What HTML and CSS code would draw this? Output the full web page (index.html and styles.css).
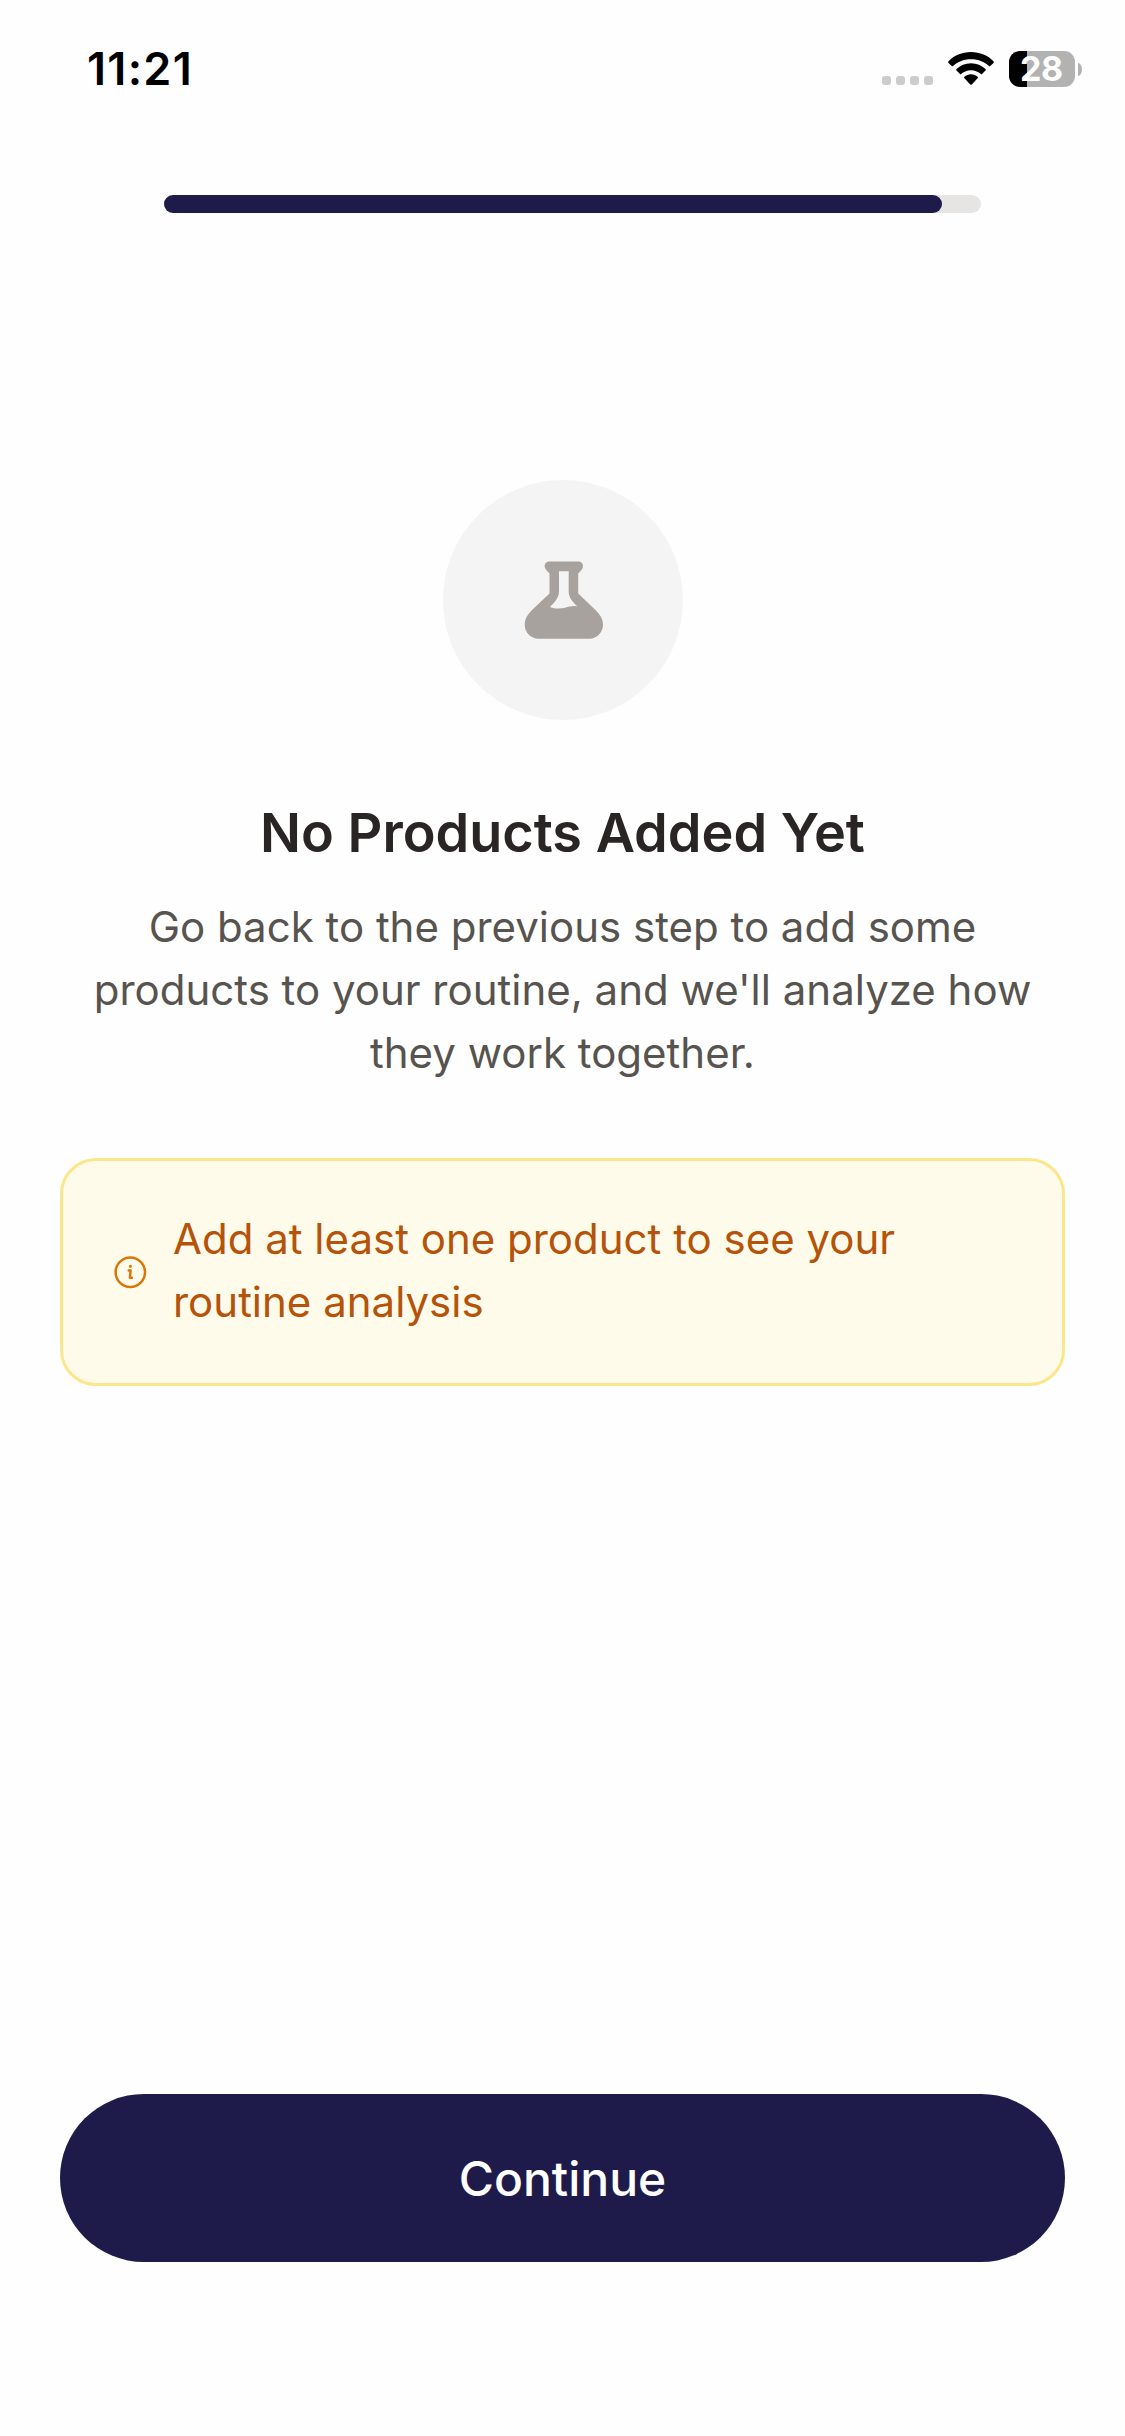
FILE: index.html
```html
<!DOCTYPE html>
<html lang="en">
<head>
<meta charset="utf-8">
<title>Routine analysis</title>
<link rel="stylesheet" href="styles.css">
</head>
<body>
<div class="screen">
  <header class="status-bar">
    <span class="time">11:21</span>
    <div class="status-icons">
      <div class="signal"><i></i><i></i><i></i><i></i></div>
      <svg class="wifi" viewBox="0 0 46 34" aria-hidden="true">
        <path d="M23 0C14 0 6 3.5 0.5 9.2C0 9.8 0 10.4 0.5 10.9L4.3 14.6C9 9.8 15.600 7.200 23 7.200S37 9.800 41.700 14.600L45.500 10.900C46 10.400 46 9.800 45.500 9.200C40 3.500 32 0 23 0Z"/>
        <path d="M23 11.200C17.300 11.200 12.200 13.400 8.500 17C8 17.500 8 18.100 8.500 18.600L12.500 22.600C15.300 19.900 18.900 18.300 23 18.300S30.700 19.900 33.500 22.600L37.500 18.600C38 18.100 38 17.500 37.500 17C33.800 13.400 28.700 11.200 23 11.200Z"/>
        <path d="M23 22.300C20.500 22.300 18.200 23.200 16.400 24.800C15.900 25.300 15.900 25.800 16.400 26.300L22.200 32.400C22.700 32.900 23.300 32.900 23.800 32.400L29.600 26.300C30.100 25.800 30.100 25.300 29.600 24.800C27.800 23.200 25.500 22.300 23 22.300Z"/>
      </svg>
      <div class="battery">
        <div class="battery-body">28</div>
        <div class="battery-cap"></div>
      </div>
    </div>
  </header>

  <div class="progress"><div class="progress-fill" style="width: 95.23%"></div></div>

  <main class="content">
    <div class="flask-badge">
      <svg class="flask" viewBox="0 0 78 78" aria-hidden="true">
        <path fill-rule="evenodd" d="M25.800 0.500H54C57 0.500 59 2.500 59 5.300C59 8 57 9.500 54.200 12.500V32.500L72 49.500C76.500 54 79 58.500 79 63.500C79 71.500 73 77.700 65.500 77.700H14.500C6.700 77.700 0.700 71.500 0.700 63.500C0.700 58.500 3 54 7.500 49.500L25.500 32.500V12.500C23 9.500 20.600 8 20.600 5.300C20.600 2.500 22.800 0.500 25.800 0.500ZM35 10.200V30.500C35 36.500 30.500 41.500 26 46C30.500 48 36.500 48 41 46.800C45.500 45.500 49.500 44.500 53.500 45.500C48.500 41 44.700 36.500 44.700 30.500V10.200Z"/>
      </svg>
    </div>
    <h1 class="title">No Products Added Yet</h1>
    <p class="description">Go back to the previous step to add some products to your routine, and we'll analyze how they work together.</p>
    <div class="notice">
      <svg class="info" viewBox="0 0 42 42" aria-hidden="true">
        <circle cx="21.300" cy="21.200" r="14.700"/>
        <path class="info-stem" d="M19.700 19.500H21.600L20.900 26.700H22.900"/>
        <circle class="info-dot" cx="21.400" cy="15.200" r="1.500"/>
      </svg>
      <p class="notice-text">Add at least one product to see your routine analysis</p>
    </div>
  </main>

  <footer class="footer"><button class="continue" type="button">Continue</button></footer>
</div>
</body>
</html>
```
FILE: styles.css
```css
* {
  box-sizing: border-box;
  margin: 0;
  padding: 0;
}

body {
  background: #fefefe;
  font-family: Inter, "Liberation Sans", sans-serif;
}

.screen {
  display: flex;
  flex-direction: column;
  width: 1125px;
  height: 2436px;
}

.status-bar {
  display: flex;
  justify-content: space-between;
  height: 195px;
  padding: 51px 43px 0 87px;
}

.time {
  height: 36px;
  font-size: 45px;
  font-weight: 600;
  line-height: 36px;
  letter-spacing: 1.3px;
  color: #000;
}

.status-icons {
  display: flex;
  height: 36px;
}

.signal {
  display: flex;
  gap: 5px;
  margin: 25px 15px 0 0;
}

.signal i {
  width: 9px;
  height: 9px;
  border-radius: 3px;
  background: #ccc;
}

.wifi {
  width: 46px;
  height: 34px;
  margin: 1px 15px 0 0;
}

.battery {
  display: flex;
  align-items: center;
  gap: 3px;
}

.battery-body {
  width: 66px;
  height: 36px;
  padding-left: 11px;
  border-radius: 11px;
  background: linear-gradient(to right, #000 18px, #b2b2b2 18px);
  color: #fff;
  font-size: 34px;
  font-weight: 700;
  line-height: 36px;
  letter-spacing: -0.5px;
}

.battery-cap {
  width: 4px;
  height: 13px;
  border-radius: 0 4px 4px 0 / 0 6.5px 6.5px 0;
  background: #b2b2b2;
}

.progress {
  width: 817px;
  height: 18px;
  margin-left: 164px;
  border-radius: 9px;
  background: #e7e5e4;
}

.progress-fill {
  height: 18px;
  border-radius: 9px;
  background: #1e1b4b;
}

.content {
  display: flex;
  flex-direction: column;
  align-items: center;
  flex: 1;
  padding: 267px 60px 0;
}

.flask-badge {
  display: grid;
  place-items: center;
  width: 240px;
  height: 240px;
  border-radius: 50%;
  background: #f4f4f4;
}

.flask {
  width: 78px;
  height: 78px;
  overflow: visible;
  fill: #a8a29e;
}

.title {
  margin-top: 73px;
  font-size: 54px;
  font-weight: 600;
  line-height: 80px;
  color: #292524;
}

.description {
  width: 960px;
  margin-top: 22px;
  font-size: 42px;
  line-height: 63px;
  text-align: center;
  color: #57534e;
}

.notice {
  display: flex;
  align-items: center;
  gap: 22px;
  width: 1005px;
  height: 228px;
  margin-top: 74px;
  padding: 0 46px;
  border: 3px solid #fde68a;
  border-radius: 36px;
  background: #fffbeb;
}

.info {
  flex: none;
  width: 42px;
  height: 42px;
  fill: none;
  stroke: #d97706;
  stroke-width: 2.5;
}

.info-stem {
  stroke-linecap: round;
  stroke-linejoin: round;
}

.info-dot {
  fill: #d97706;
  stroke: none;
}

.notice-text {
  padding-bottom: 4px;
  font-size: 42px;
  line-height: 63px;
  color: #b45309;
}

.footer {
  height: 342px;
  padding: 0 60px;
}

.continue {
  width: 100%;
  height: 168px;
  border: 0;
  border-radius: 84px;
  background: #1e1b4b;
  color: #fff;
  font-family: inherit;
  font-size: 48px;
  font-weight: 500;
}
```
